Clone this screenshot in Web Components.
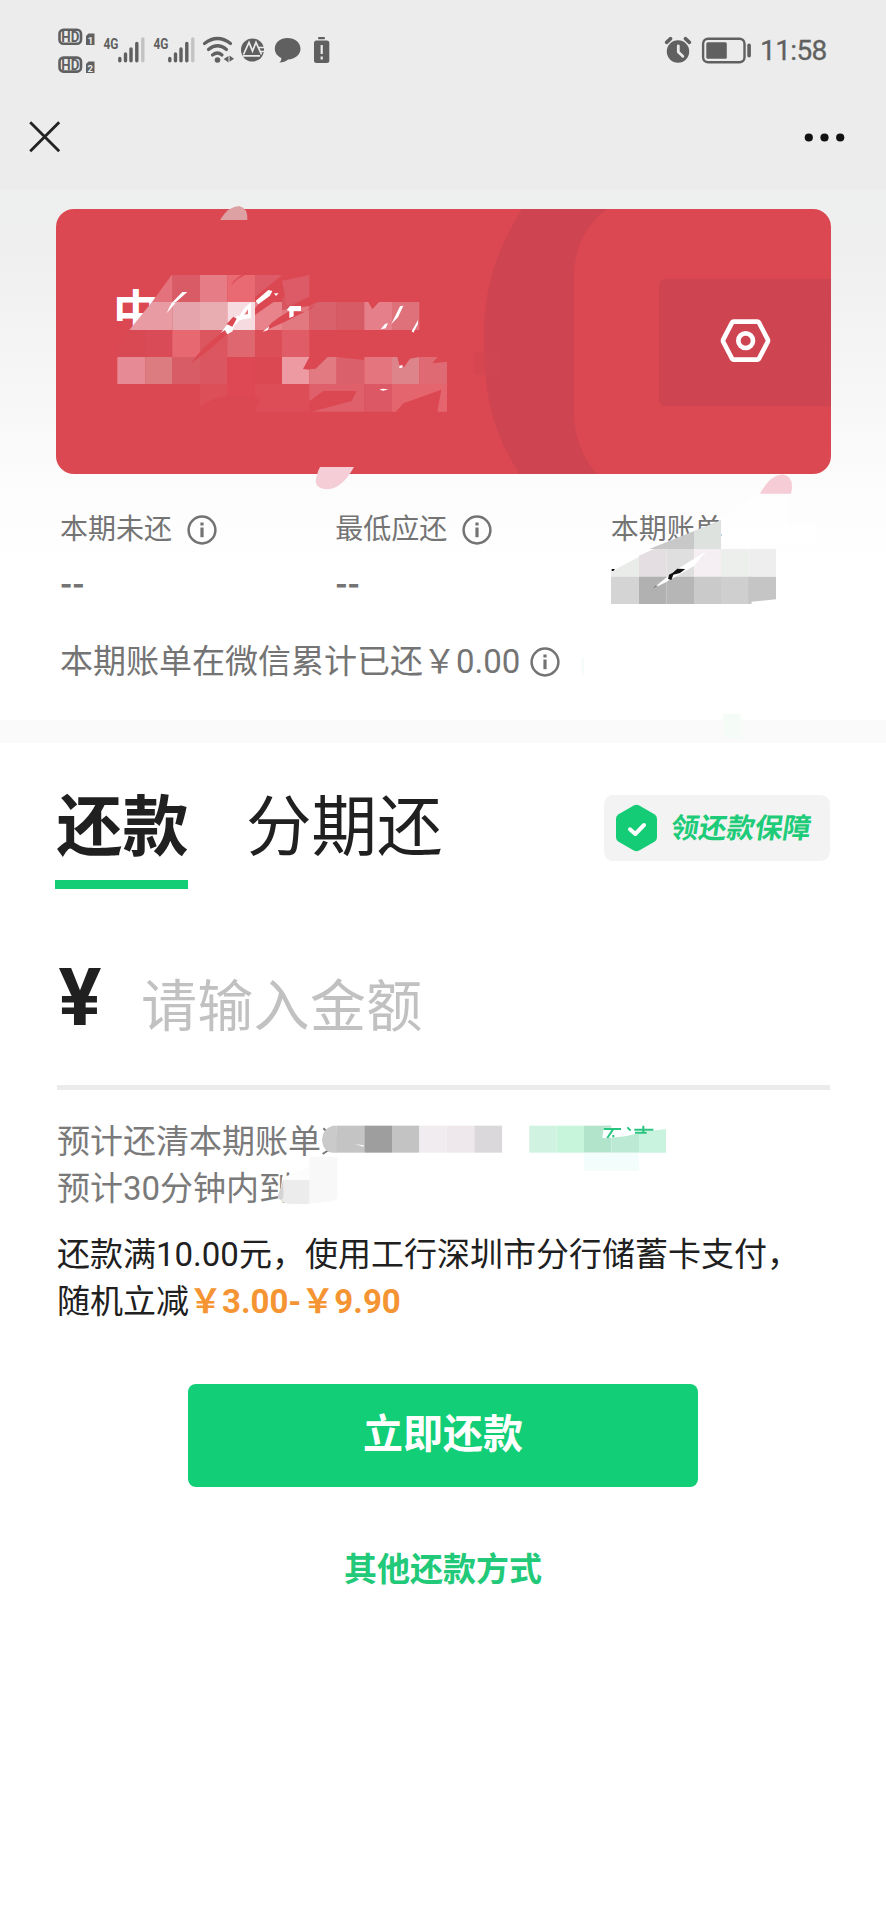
<!DOCTYPE html>
<html lang="zh-CN">
<head>
<meta charset="utf-8">
<title>信用卡还款</title>
<style>
body{margin:0;background:#fff;font-family:Roboto,"Noto Sans CJK SC",sans-serif}
</style>
</head>
<body>
<repay-page></repay-page>

<script>
const define = (name, html) => {
  const tpl = document.createElement('template');
  tpl.innerHTML = html;
  customElements.define(name, class extends HTMLElement {
    constructor() {
      super();
      this.attachShadow({ mode: 'open' }).append(tpl.content.cloneNode(true));
    }
  });
};

define('status-bar', `
<style>
:host{display:flex;justify-content:space-between;height:84px;color:#606060}
svg{display:block;flex:none}
.right{display:flex;padding-right:57px}
.time{font-size:28px;line-height:40px;margin-top:31px;width:68px;white-space:nowrap;letter-spacing:-.6px;text-indent:-1px;-webkit-text-stroke:.3px #606060}
text{font-family:Roboto,sans-serif;font-weight:700}
</style>
<svg width="340" height="84" viewBox="0 0 340 84" fill="#606060">
  <rect x="59.500" y="29.800" width="21.500" height="14" rx="4" fill="none" stroke="#606060" stroke-width="2.600"/>
  <text x="61.300" y="42" font-size="14.500" textLength="18" lengthAdjust="spacingAndGlyphs">HD</text>
  <path d="M88.500 33.500h6v11.500H86v-9z"/><text x="87.800" y="43.500" font-size="9.500" fill="#ececec">1</text>
  <rect x="59.500" y="57.600" width="21.500" height="14" rx="4" fill="none" stroke="#606060" stroke-width="2.600"/>
  <text x="61.300" y="69.800" font-size="14.500" textLength="18" lengthAdjust="spacingAndGlyphs">HD</text>
  <path d="M88.500 61.500h6v11.500H86v-9z"/><text x="87.600" y="71.500" font-size="9.500" fill="#ececec">2</text>
  <g>
    <text x="103.500" y="48.500" font-size="15.500" textLength="15" lengthAdjust="spacingAndGlyphs">4G</text>
    <g stroke="#606060" stroke-width="3.400" stroke-linecap="round"><path d="M119.800 58.500v2.300M125.500 54v6.800M131 49v11.800M136.800 43.500v17.300"/><path d="M142.800 39v21.800" stroke="#c3c3c3"/></g>
  </g>
  <g transform="translate(50 0)">
    <text x="103.500" y="48.500" font-size="15.500" textLength="15" lengthAdjust="spacingAndGlyphs">4G</text>
    <g stroke="#606060" stroke-width="3.400" stroke-linecap="round"><path d="M119.800 58.500v2.300M125.500 54v6.800M131 49v11.800M136.800 43.500v17.300"/><path d="M142.800 39v21.800" stroke="#c3c3c3"/></g>
  </g>
  <g fill="none" stroke="#606060" stroke-width="3.200" stroke-linecap="round"><path d="M204.500 43.500Q217.500 33.500 230.500 43.500M208.500 49.500Q217.500 42 226.500 49.500M212.500 55Q217.500 51 222 55"/></g>
  <circle cx="217.500" cy="60" r="2.800"/><path d="M228.500 56v6.500l-4.800-3.600M229.500 55.500l4.500 3.300-4.500 3z"/>
  <circle cx="252.500" cy="50" r="11.500"/>
  <path d="M243.500 54.500l5.500-12 3.500 8.500 3.500-8.500 5.500 12M243 55.800h17M259 47.500h6M260.500 51.500h5" fill="none" stroke="#ececec" stroke-width="1.700"/>
  <path d="M287.500 38c7.300 0 13 4.500 13 10.700s-5.700 10.500-12.300 10.700c-2.400 2-5.300 3-8.700 3 1.400-1.300 2-2.800 1.800-4.500-4-1.900-6.500-5.200-6.500-9.200C274.800 42.500 280.300 38 287.500 38z"/>
  <rect x="318" y="37" width="7" height="2.200" rx="1"/><rect x="314" y="40.500" width="15.300" height="22.500" rx="2.500"/>
  <path d="M321.700 45v9M321.700 56.500v3" stroke="#ececec" stroke-width="2.200"/>
</svg>
<div class="right">
  <svg width="99" height="84" viewBox="662 0 99 84" fill="#606060">
    <g transform="translate(.8 0)">
    <circle cx="677.200" cy="51.500" r="11.200"/>
    <path d="M665.800 42.300l4-3.600M688.600 42.300l-4-3.600" stroke="#606060" stroke-width="3.600" stroke-linecap="round"/>
    <path d="M677.500 46v6l4.500 4.200" fill="none" stroke="#ececec" stroke-width="2.800" stroke-linecap="round"/>
    <rect x="702.300" y="38.700" width="41.400" height="23.600" rx="5" fill="none" stroke="#606060" stroke-width="2.400"/>
    <rect x="705.500" y="42.300" width="20.500" height="16.400" rx="1.500"/><rect x="746.500" y="43.500" width="3.600" height="14" rx="1.800"/>
    </g>
  </svg>
  <div class="time">11:58</div>
</div>`);

define('nav-bar', `
<style>
:host{display:flex;justify-content:space-between;height:106px;padding:0 41px 0 29px;box-sizing:border-box}
svg{display:block;margin-top:37px}
</style>
<svg width="32" height="32" viewBox="0 0 32 32"><path d="M1.200 1.200l29 29M30.200 1.200l-29 29" stroke="#222" stroke-width="2.800"/></svg>
<svg width="41" height="32" viewBox="0 0 41 32" fill="#111"><circle cx="4.800" cy="16.500" r="4.100"/><circle cx="20.500" cy="16.500" r="4.100"/><circle cx="36.200" cy="16.500" r="4.100"/></svg>`);

define('bank-card', `
<style>
:host{display:block;position:relative;height:265px;margin:19px 55px 0 56px}
.bg{position:absolute;inset:0;border-radius:18px;overflow:hidden;background:#db4852}
svg{position:absolute;left:0;top:0;display:block;overflow:visible}
.name{position:relative;padding:75px 0 0 57px;font-size:46px;line-height:56px;font-weight:700;color:#fff}
</style>
<div class="bg">
  <svg width="775" height="265" viewBox="56 209 775 265">
    <g transform="translate(460 200) scale(.33333)">
      <path d="M185 27C100 170 72 270 72 410C72 590 100 700 180 825H412C350 745 342 690 342 620V230C342 150 375 75 440 27z" fill="#ce4450"/>
      <rect x="42" y="455" width="83" height="70" fill="#d14651" opacity=".6"/>
      <rect x="597" y="236" width="560" height="383" rx="20" fill="#ce4450"/>
      <path d="M821 365h71q3 0 5 3l26 50q2 4 0 8l-26 50q-2 3-5 3h-71q-3 0-5-3l-26-50q-2-4 0-8l26-50q2-3 5-3z" fill="none" stroke="#fff" stroke-width="14"/>
      <circle cx="857" cy="422" r="22" fill="none" stroke="#fff" stroke-width="14"/>
    </g>
  </svg>
</div>
<div class="name">中</div>
<svg width="775" height="265" viewBox="56 209 775 265">
  <g transform="translate(40 200) scale(.33333)" shape-rendering="geometricPrecision">
    <path d="M540 60Q565 18 598 18Q624 24 622 60z" fill="#dda0a3"/>
    <path d="M840 801H942Q905 868 860 868Q820 865 829 832Q833 812 840 801z" fill="#f5cdd6"/>
    <path d="M395 225H398V306H336z" fill="#e3727c"/>
    <path d="M397 225H480V306H397z" fill="#d85b66"/>
    <path d="M480 225H562V306H480z" fill="#e67c86"/>
    <path d="M562 225H645V306H562z" fill="#e96a72"/>
    <path d="M645 225H726L645 290z" fill="#df5f6a"/>
    <path d="M726 242L808 225V290L726 335z" fill="#d8545e"/>
    <path d="M336 306H397V390H268z" fill="#e99ba4"/>
    <path d="M397 306H480V390H397z" fill="#e5a4ab"/>
    <path d="M480 306H562V390H480z" fill="#e8adb1"/>
    <path d="M562 306H645V390H562z" fill="#f6dce1"/>
    <path d="M645 306H726V390H645z" fill="#e8838b"/>
    <path d="M726 330L808 318V390H726z" fill="#e27880"/>
    <path d="M808 318L832 306H890V390H808z" fill="#d9616b"/>
    <path d="M890 306H973V390H890z" fill="#d65b65"/>
    <path d="M973 306H985L997 328L1017 306H1056V390H973z" fill="#e5808a"/>
    <path d="M1056 306H1138V390H1056z" fill="#df717a"/>
    <path d="M268 390H316V471H232V440z" fill="#d94954"/><path d="M316 390H397V471H316z" fill="#d94c57"/>
    <path d="M397 390H480V471H397z" fill="#e76870"/>
    <path d="M480 390H562V471H480z" fill="#dc5660"/>
    <path d="M562 390H645V471H562z" fill="#df6770"/>
    <path d="M645 390H726V471H645z" fill="#db4e58"/>
    <path d="M726 390H808V471H726z" fill="#e05c67"/>
    <path d="M232 471H316V552H232z" fill="#e68b95"/>
    <path d="M316 471H397V552H316z" fill="#dc7b80"/>
    <path d="M397 471H480V552H397z" fill="#d75c65"/>
    <path d="M480 471H562V552H480z" fill="#da5761"/>
    <path d="M480 552H562V588Q515 592 480 620z" fill="#dc4f59"/>
    <path d="M562 471H645V590H562z" fill="#dd4854"/>
    <path d="M726 471H808L789 507L808 509V552H726z" fill="#ed9aa3"/>
    <path d="M863 471H890V552H808V508L827 506z" fill="#e27a82"/>
    <path d="M890 471L973 480V552H890z" fill="#da606b"/>
    <path d="M973 471H1056V552H973z" fill="#e4747e"/>
    <path d="M1056 471H1072L1080 503L1093 500L1110 476L1138 471V552H1056z" fill="#dd848a"/>
    <path d="M1138 471H1193L1177 490L1221 485V552H1138z" fill="#df6a74"/>
    <path d="M662 590L645 635H808V552H645V590z" fill="#dc4d58"/>
    <path d="M808 552H973V635H815L935 603L950 573H850L808 604z" fill="#df606a"/>
    <path d="M973 552H1056V635H973z" fill="#dc5865"/>
    <path d="M1056 552H1221V635H1192L1204 569L1090 610L1068 635H1056z" fill="#e5656e"/>
    <path d="M572 257Q590 225 620 222L592 238zM454 490Q480 445 550 395L560 404Q510 450 454 490z" fill="#db4852"/>
    <path d="M645 325L728 227H800Q755 285 705 303L645 345z" fill="#db4852"/>
    <path d="M645 290V225H726L645 290zM726 242L808 225V290L740 318z" fill="#dc5b66"/>
    <path d="M675 392Q690 365 745 335H795L830 310L815 325L735 365z" fill="#db4852"/>
    <g fill="#fff">
      <path d="M427 276H442L408 306H398zM397 306L407 308L380 340L388 322z"/>
      <path d="M685 270L697 273L690 287L655 313L647 303zM702 280H716L708 288z"/>
      <path d="M598 348L613 324L633 307V354L600 360L582 378L578 394L562 403L555 390L543 398L560 375H568L590 347z"/>
      <path d="M740 330L750 318H783V333H761V349L748 354V334zM668 396L688 378L684 390z"/>
      <path d="M1080 319L1090 317L1074 352L1054 372zM1022 388L1035 372L1044 369L1037 385zM1134 360V372L1120 398L1115 394zM1078 497L1088 495L1087 503L1078 504zM1018 569L1028 566L1045 568L1030 572z"/>
    </g>
    <path d="M613 344L624 328V342z" fill="#e6777f"/>
    <path d="M560 372L580 350L590 356L577 380z" fill="#db4852"/>
  </g>
</svg>`);

define('info-icon', `
<style>:host{display:block;width:30px;height:30px}svg{display:block}</style>
<svg width="30" height="30" viewBox="0 0 30 30" fill="none" stroke="#737373"><circle cx="15" cy="15" r="13.400" stroke-width="2.500"/><path d="M15 12.500v9.700" stroke-width="3.200"/><path d="M15 7.500v3" stroke-width="3.200"/></svg>`);

define('stat-item', `
<style>
:host{display:block;width:276px;color:#747474}
.label{display:flex;align-items:center;gap:15px;height:40px;font-size:28px;line-height:40px;position:relative;top:-1px}
.value{height:40px;margin-top:10px;font:700 33px/40px "Noto Sans CJK SC",sans-serif}
</style>
<div class="label"><slot></slot></div>
<div class="value"><slot name="value"></slot></div>`);

define('bill-summary', `
<style>
:host{display:block;height:246px;position:relative;color:#747474}
.stats{display:flex;padding:37px 0 0 60px}
.total{display:flex;align-items:center;gap:10px;padding-left:60px;margin-top:41px;font-size:33px;line-height:40px}
.mask{position:absolute;left:450px;top:-4px;overflow:visible}
</style>
<div class="stats">
  <stat-item>本期未还<info-icon></info-icon><span slot="value">--</span></stat-item>
  <stat-item>最低应还<info-icon></info-icon><span slot="value">--</span></stat-item>
  <stat-item>本期账单</stat-item>
</div>
<div class="total"><span>本期账单在微信累计已还￥0.00</span><info-icon></info-icon></div>
<svg class="mask" width="436" height="280" viewBox="0 0 1308 840">
  <path d="M930 71Q960 15 998 13Q1035 20 1023 71z" fill="#f6cdd7"/>
  <path d="M905 76H1015V165H1098V225H815V151z" fill="#fff" opacity=".6"/>
  <path d="M598 237L813 151V237z" fill="#c8c8c8"/><path d="M732 184L813 151V237H732z" fill="#dee2de"/>
  <path d="M483 305L567 260V320H483z" fill="#eaecea"/>
  <path d="M567 257L612 237H650V320H567z" fill="#e4dde2"/>
  <path d="M650 237H732V320H650z" fill="#dfdfdf"/>
  <path d="M732 237H813V320H732z" fill="#f5eef3"/>
  <path d="M813 237H895V320H813z" fill="#edefed"/><path d="M895 237H978V320H895z" fill="#eeeeee"/>
  <path d="M483 320H567V402H483z" fill="#d4d4d4"/><path d="M567 320H650V402H567z" fill="#b1b1b1"/>
  <path d="M650 320H732V402H650z" fill="#b6b6b6"/><path d="M732 320H813V402H732z" fill="#cacaca"/>
  <path d="M813 320H904V402H813z" fill="#cfcfcf"/><path d="M895 320H978V388L904 395V402H895z" fill="#c5c5c5"/>
  <path d="M606 358L670 305L768 244L732 288L650 335z" fill="#fff"/>
  <path d="M682 296L706 297L690 309L670 314L664 330L654 327L657 314L668 308zM485 297H495L490 303H485z" fill="#111"/>
  <path d="M606 358L616 347L625 347z" fill="#777"/>
  <path d="M395 565H402V615H395z" fill="#f5fcf9"/><path d="M818 732H873V805H825z" fill="#f5fbf7"/>
</svg>`);

define('tab-item', `
<style>
:host{display:block;height:146px;font-size:65.500px;line-height:60px;color:#202020;padding-top:55px;box-sizing:border-box;white-space:nowrap}
:host([active]){font-weight:700;width:133px;font-size:66px}
i{display:none;height:9px;margin-top:22px;background:#14cd75}
:host([active]) i{display:block}
span{display:block}
:host([active]) span{padding-left:1.500px}
</style>
<span><slot></slot></span><i></i>`);

define('guard-badge', `
<style>
:host{display:flex;align-items:center;width:226px;height:66px;border-radius:9px;background:#f3f3f3;color:#1ecb78;box-sizing:border-box;padding-left:11px;gap:13px;font-size:28px;font-weight:700;line-height:40px}
svg{display:block;flex:none}
span{display:block;transform:skewX(-9deg);white-space:nowrap;padding-top:2px}
</style>
<svg width="43" height="48" viewBox="0 0 43 48"><path d="M18.800 1.600q2.700-1.500 5.400 0l15.200 8.700q2.600 1.500 2.600 4.500v18.400q0 3-2.600 4.500l-15.200 8.700q-2.700 1.500-5.400 0l-15.200-8.700q-2.600-1.500-2.600-4.500v-18.400q0-3 2.600-4.500z" fill="#14cc75"/><path d="M15 25.300l5.300 4.700 8.700-9" fill="none" stroke="#fff" stroke-width="4" stroke-linecap="round" stroke-linejoin="round"/></svg>
<span><slot></slot></span>`);

define('amount-field', `
<style>
:host{display:flex;height:201px;margin:0 56px 0 57px;box-sizing:border-box;border-bottom:5px solid #ebebeb;font-size:56px}
b{font-size:80px;line-height:80px;width:84px;padding:69px 0 0 1.500px;color:#202020;box-sizing:border-box;flex:none}
span{line-height:70px;padding-top:83px;color:#c1c1c1;white-space:nowrap;letter-spacing:.3px}
</style>
<b>¥</b><span><slot></slot></span>`);

define('repay-notes', `
<style>
:host{display:block;position:relative;height:236px;padding:27.500px 0 0 57px;box-sizing:border-box;font-size:33px;line-height:47px;color:#7a7a7a}
p{margin:0;white-space:nowrap}
.offer{margin-top:19px;color:#202020}
b{color:#f59432}
svg{position:absolute;left:300px;top:30px;display:block;overflow:visible}
</style>
<p>预计还清本期账单</p>
<p>预计30分钟内到</p>
<p class="offer">还款满10.00元，使用工行深圳市分行储蓄卡支付，<br>随机立减<b>￥3.00-￥9.90</b></p>
<svg width="380" height="100" viewBox="300 1120 380 100">
  <g transform="translate(40 1070) scale(.33333)">
    <path d="M850 175L862 186M852 202L862 192M848 252L866 240" stroke="#777" stroke-width="6"/>
    <path d="M890 167H878Q848 175 846 210Q850 248 880 248H892z" fill="#cacaca"/>
    <path d="M890 167H973V248H890z" fill="#c4c4c4"/><path d="M973 167H1056V248H973z" fill="#9f9e9f"/>
    <path d="M1056 167H1138V248H1056z" fill="#c3c3c3"/><path d="M1138 167H1220V248H1138z" fill="#f0ecef"/>
    <path d="M1220 167H1303V248H1220z" fill="#eee8ed"/><path d="M1303 167H1386V248H1303z" fill="#dad8da"/>
    <path d="M945 222L972 226L970 231z" fill="#f5f5f5"/>
    <path d="M808 260H892V385Q880 398 808 400z" fill="#f8f8f9"/>
    <path d="M735 320L808 290V402H765Q725 403 714 380Q725 355 726 320z" fill="#fcfcfc"/>
    <path d="M730 330H808V402H765Q725 403 714 380Q725 355 730 330z" fill="#ececec"/>
    <path d="M730 330V385L722 390Q712 385 714 375Q725 355 730 330z" fill="#d4d4d4"/>
    <g transform="translate(1200 0)">
      <path d="M268 167H350V248H268z" fill="#cff3e0"/><path d="M350 167H432V248H350z" fill="#c6f5dc"/>
      <path d="M432 167H514V248H432z" fill="#b2e4cc"/><path d="M514 195L597 188V248H514z" fill="#bce9d3"/><path d="M597 187L678 177V248H597z" fill="#caf3df"/>
      <path d="M432 248H597V302H432z" fill="#f3fefc"/>
      <path d="M491 173H530L597 170V190L555 199L498 205L487 203z" fill="#fff"/>
      <path d="M491 177H543M519 178L502 204M520 195V202M562 172L572 182M583 179H640M610 167V188M585 188H620" fill="none" stroke="#28c580" stroke-width="6"/>
    </g>
  </g>
</svg>`);

define('primary-button', `
<style>
:host{display:block}
button{display:block;width:510px;height:103px;margin:0 auto;border:0;border-radius:8px;background:#12ce76;color:#fff;font:700 40px/60px Roboto,"Noto Sans CJK SC",sans-serif;padding:0 0 2px}
</style>
<button><slot></slot></button>`);

define('text-link', `
<style>
:host{display:block;margin-top:63px;text-align:center;font-size:33px;line-height:40px;font-weight:700;color:#22c979}
</style>
<slot></slot>`);

define('repay-page', `
<style>
:host{display:block;height:1920px;overflow:hidden;background:#fff}
.head{background:#ececec;height:190px}
.top{display:flow-root;height:530px;background:linear-gradient(#eeefef,#efefef 12%,#fcfcfc 56%,#fff 72%)}
.divider{height:23px;background:#fafafa}
.tabs{display:flex;height:146px;padding-left:55px}
tab-item + tab-item{margin-left:58px}
guard-badge{margin:52px 56px 0 auto}
primary-button{margin-top:58px}
</style>
<div class="head"><status-bar></status-bar><nav-bar></nav-bar></div>
<div class="top"><bank-card></bank-card><bill-summary></bill-summary></div>
<div class="divider"></div>
<div class="tabs"><tab-item active>还款</tab-item><tab-item>分期还</tab-item><guard-badge>领还款保障</guard-badge></div>
<amount-field>请输入金额</amount-field>
<repay-notes></repay-notes>
<primary-button>立即还款</primary-button>
<text-link>其他还款方式</text-link>`);
</script>
</body>
</html>
